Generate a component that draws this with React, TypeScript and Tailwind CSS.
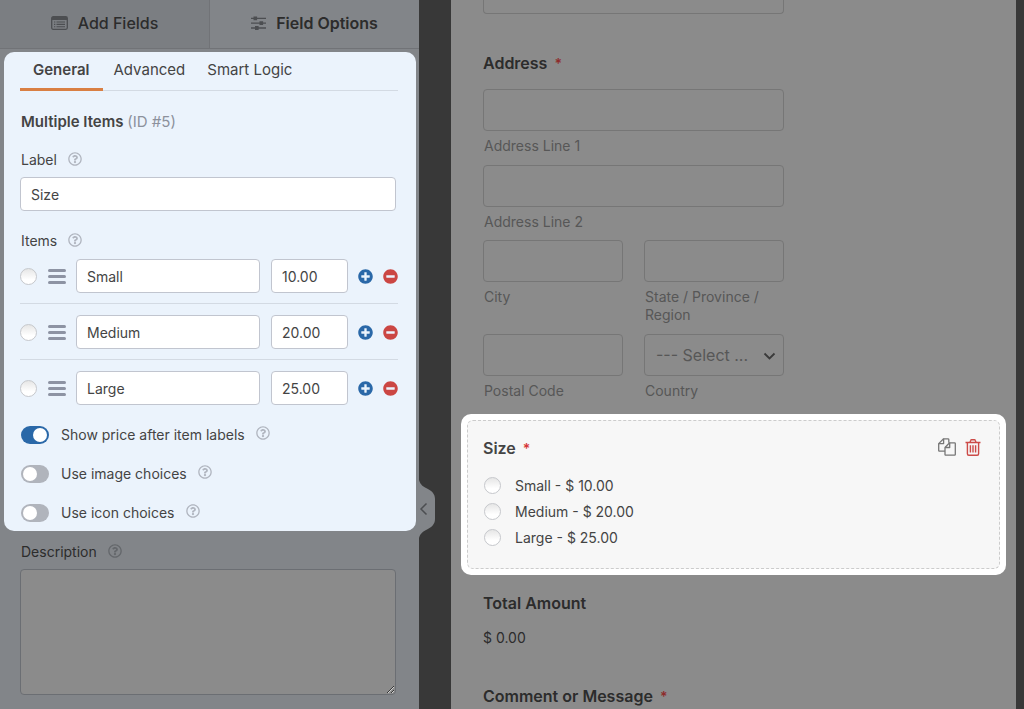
import { useState } from 'react';
import clsx from 'clsx';
import {
  FaMinusCircle,
  FaPlusCircle,
  FaRegQuestionCircle,
} from 'react-icons/fa';

import type { FC, ReactNode } from 'react';

interface Item {
  name: string;
  price: string;
}

const ITEMS: Item[] = [
  { name: 'Small', price: '10.00' },
  { name: 'Medium', price: '20.00' },
  { name: 'Large', price: '25.00' },
];

const TABS = ['General', 'Advanced', 'Smart Logic'];

const radioClass =
  'size-[17px] shrink-0 appearance-none rounded-full border border-[#c6c8cc] bg-linear-to-b from-[#e6e6e6] to-white to-70%';

const fieldClass =
  'h-[34px] min-w-0 rounded-[4px] border border-[#c1c5cf] bg-white px-[10px] pt-px text-sm text-[#444]';

const previewInputClass =
  'h-[42px] w-full rounded-[4px] border border-[#767676] bg-transparent';

const ListIcon: FC = () => (
  <svg width="17" height="14" viewBox="0 0 17 14" fill="none">
    <rect x=".7" y=".7" width="15.6" height="12.6" rx="1.5" stroke="#4c4e51" strokeWidth="1.3" />
    <path d="M1 1h15v3H1z" fill="#4c4e51" />
    <path d="M3 6h1.3M3 8.4h1.3M3 10.8h1.3M5.5 6H14M5.5 8.4H14M5.5 10.8H14" stroke="#4c4e51" strokeWidth="1.1" />
  </svg>
);

const SlidersIcon: FC = () => (
  <svg width="15" height="14" viewBox="0 0 15 14">
    <path d="M0 2.3h15M0 7.2h15M0 12h15" stroke="#4c4e51" strokeWidth="1.3" />
    <path d="M2.5.4h3.6v3.8H2.5zM8.5 5.3h3.6v3.8H8.5zM4 10.1h3.6v3.8H4z" fill="#4c4e51" />
  </svg>
);

const CopyIcon: FC = () => (
  <svg width="18" height="18" viewBox="0 0 18 18" fill="none" stroke="#777" strokeWidth="1.3" strokeLinejoin="round">
    <path d="M7 13.2H1.5a.8.8 0 0 1-.8-.8V5.6L5.6.8H10a.8.8 0 0 1 .8.8v3.2" />
    <path d="M5.6.8v4.8H.8" />
    <path d="M11.6 4.8h5a.7.7 0 0 1 .7.7v11a.7.7 0 0 1-.7.7H7.7a.7.7 0 0 1-.7-.7V9.5z" />
    <path d="M11.7 4.8v4.7H7" />
  </svg>
);

const TrashIcon: FC = () => (
  <svg width="16" height="17" viewBox="0 0 16 17" fill="none" stroke="#cc4b48" strokeWidth="1.4">
    <path d="M.5 3.5h15M5 3.3 5.8 1.3c.1-.3.4-.5.7-.5h3c.3 0 .6.2.7.5l.8 2" />
    <path d="M2.4 3.5v11.2c0 .8.6 1.5 1.4 1.5h8.4c.8 0 1.4-.7 1.4-1.5V3.5" />
    <path d="M5.4 6.2v7.2M8 6.2v7.2M10.6 6.2v7.2" />
  </svg>
);

const Help: FC<{ dim?: boolean }> = ({ dim }) => (
  <button type="button" aria-label="Help" className="-mt-[3px]">
    <FaRegQuestionCircle
      className={clsx('size-[14px]', dim ? 'text-[#64676b]' : 'text-[#b0b5bf]')}
    />
  </button>
);

const Required: FC<{ dim?: boolean }> = ({ dim }) => (
  <span className={clsx('ml-[3px] text-sm', dim ? 'text-[#8e2c2b]' : 'text-[#d63637]')}>
    *
  </span>
);

interface ToggleProps {
  id: string;
  label: string;
  defaultChecked?: boolean;
}

const Toggle: FC<ToggleProps> = ({ id, label, defaultChecked }) => (
  <div className="flex h-[39px] items-center text-sm">
    <input
      id={id}
      type="checkbox"
      role="switch"
      defaultChecked={defaultChecked}
      className="ml-px h-[18px] w-7 appearance-none rounded-full bg-[#b0b4bc] p-[2px] before:block before:size-[14px] before:rounded-full before:bg-white checked:bg-[#2a68a8] checked:before:translate-x-[10px]"
    />
    <label htmlFor={id} className="mr-[11px] ml-3 pt-px">
      {label}
    </label>
    <Help />
  </div>
);

const AddressField: FC<{ id: string; label: string; children?: ReactNode }> = ({
  id,
  label,
  children,
}) => (
  <div>
    {children || <input id={id} type="text" className={clsx(previewInputClass, 'block')} />}
    <label
      htmlFor={id}
      className="mt-[6px] block pl-px text-sm leading-[18px] text-[#575757]"
    >
      {label}
    </label>
  </div>
);

const Sidebar: FC = () => {
  const [tab, setTab] = useState('General');

  return (
    <aside className="relative w-[419px] shrink-0 bg-[#828589] text-[15px] leading-5 text-[#444]">
      <nav className="flex h-[49px] border-b border-[#717377] text-base text-[#2c2c2c]">
        <button
          type="button"
          className="flex flex-1 items-center justify-center gap-[10px] border-r border-[#717377] bg-[#7b7e82] pb-[2px] font-medium"
        >
          <ListIcon />
          Add Fields
        </button>
        <button
          type="button"
          className="flex flex-1 items-center justify-center gap-[10px] pb-[2px] font-semibold"
        >
          <SlidersIcon />
          Field Options
        </button>
      </nav>

      <section className="mr-[3px] ml-1 mt-[3px] h-[479px] rounded-[10px] bg-[#ebf3fc] pr-[18px] pl-4">
        <div className="flex h-[39px] border-b border-[#d3dae3]">
          {TABS.map((name) => (
            <button
              key={name}
              type="button"
              onClick={() => setTab(name)}
              className={clsx(
                'h-[39px] border-b-3',
                tab === name
                  ? 'border-[#d97f43] px-[13px] font-semibold'
                  : 'border-transparent px-[11px]',
              )}
            >
              {name}
            </button>
          ))}
        </div>

        <h2 className="mt-[21px] pl-px font-semibold">
          Multiple Items <span className="font-normal text-[#8c919c]">(ID #5)</span>
        </h2>

        <div className="mt-[18px] flex items-center gap-[11px] pl-px text-sm leading-5">
          <label htmlFor="field-label">Label</label>
          <Help />
        </div>
        <div className="mt-[7px] pr-[2px]">
          <input id="field-label" type="text" defaultValue="Size" className={clsx(fieldClass, 'block w-full')} />
        </div>

        <div className="mt-5 flex items-center gap-[11px] pl-px text-sm leading-5">
          <span>Items</span>
          <Help />
        </div>
        <div className="mt-2 divide-y divide-[#d3dae3]">
          {ITEMS.map((item) => (
            <div key={item.name} className="flex items-center pb-[10px] not-first:pt-[11px]">
              <input type="radio" name="default-item" aria-label={`${item.name} by default`} className={radioClass} />
              <button type="button" aria-label="Reorder" className="mr-[10px] ml-[11px] flex w-[18px] shrink-0 flex-col gap-[3px]">
                <span className="h-[3px] rounded-xs bg-[#8d93a3]" />
                <span className="h-[3px] rounded-xs bg-[#8d93a3]" />
                <span className="h-[3px] rounded-xs bg-[#8d93a3]" />
              </button>
              <input type="text" aria-label="Item name" defaultValue={item.name} className={clsx(fieldClass, 'flex-1')} />
              <input type="text" aria-label="Item price" defaultValue={item.price} className={clsx(fieldClass, 'mr-[10px] ml-[11px] w-[77px]')} />
              <button type="button" aria-label="Add item" className="mr-[10px]">
                <FaPlusCircle className="size-[15px] text-[#2a68a8]" />
              </button>
              <button type="button" aria-label="Remove item">
                <FaMinusCircle className="size-[15px] text-[#cb4643]" />
              </button>
            </div>
          ))}
        </div>

        <Toggle id="show-price" label="Show price after item labels" defaultChecked />
        <Toggle id="image-choices" label="Use image choices" />
        <Toggle id="icon-choices" label="Use icon choices" />
      </section>

      <div className="pt-[11px] pr-[23px] pl-5">
        <div className="flex items-center gap-[11px] pl-px text-sm leading-5 text-[#2c2c2c]">
          <label htmlFor="description">Description</label>
          <Help dim />
        </div>
        <textarea
          id="description"
          className="mt-[7px] block h-[126px] w-full rounded-[4px] border border-[#6b6e73] bg-[#8b8b8b]"
        />
      </div>

      <button type="button" aria-label="Collapse sidebar" className="absolute top-[480px] left-full">
        <svg width="16" height="58" viewBox="0 0 16 58" fill="none">
          <path d="M0 0c1.5 5 4 6.500 8 8.500C13 11 16 14 16 19v20c0 5-3 8-8 10.500-4 2-6.500 3.500-8 8.500z" fill="#828589" />
          <path d="M7.500 23.500 2 29l5.500 5.500" stroke="#4c4e51" strokeWidth="1.500" />
        </svg>
      </button>
    </aside>
  );
};

const Preview: FC = () => (
  <main className="ml-8 min-w-0 flex-1 bg-[#8b8b8b] px-[10px] text-[#2c2c2c]">
    <div className="px-[22px]">
      <input type="text" aria-label="Previous field" className="block h-[14px] w-[301px] rounded-b-[4px] border border-t-0 border-[#767676]" />

      <h3 className="mt-[37px] text-base font-semibold">
        Address <Required dim />
      </h3>
      <div className="mt-[14px] flex w-[301px] flex-col gap-[10px]">
        <AddressField id="line1" label="Address Line 1" />
        <AddressField id="line2" label="Address Line 2" />
        <div className="-mt-px grid grid-cols-2 gap-x-[21px] gap-y-[10px]">
          <AddressField id="city" label="City" />
          <AddressField id="state" label="State / Province / Region" />
          <AddressField id="postal" label="Postal Code" />
          <AddressField id="country" label="Country">
            <div className="relative">
              <select id="country" className={clsx(previewInputClass, 'block appearance-none pl-[11px] text-base text-[#575757]')}>
                <option>--- Select ...</option>
              </select>
              <svg className="pointer-events-none absolute top-[18px] right-2" width="13" height="9" viewBox="0 0 13 9" fill="none">
                <path d="m1.500 1.500 5 5 5-5" stroke="#3a3a3a" strokeWidth="1.800" />
              </svg>
            </div>
          </AddressField>
        </div>
      </div>
    </div>

    <section className="mt-[14px] rounded-[10px] bg-white p-[6px]">
      <div className="h-[149px] rounded-[6px] border border-dashed border-[#ccc] bg-[#f7f7f7] pt-[15px] pr-[18px] pl-[15px] text-[#444]">
        <div className="flex items-start justify-between">
          <h3 className="text-base font-semibold">
            Size <Required />
          </h3>
          <div className="flex gap-[9px] pt-[2px]">
            <button type="button" aria-label="Duplicate">
              <CopyIcon />
            </button>
            <button type="button" aria-label="Delete">
              <TrashIcon />
            </button>
          </div>
        </div>
        <ul className="mt-3 text-sm">
          {ITEMS.map((item) => (
            <li key={item.name} className="flex h-[26px] items-center gap-[14px]">
              <input id={`size-${item.name}`} type="radio" name="size" className={clsx(radioClass, 'ml-px')} />
              <label htmlFor={`size-${item.name}`} className="pt-[2px]">
                {item.name} - $ {item.price}
              </label>
            </li>
          ))}
        </ul>
      </div>
    </section>

    <div className="px-[22px]">
      <h3 className="mt-4 text-base font-semibold">Total Amount</h3>
      <p className="mt-[13px] text-sm leading-5">$ 0.00</p>
      <h3 className="mt-9 text-base font-semibold">
        Comment or Message <Required dim />
      </h3>
    </div>
  </main>
);

export default function App() {
  return (
    <div className="flex min-h-screen bg-[#383838] pr-2 font-[Inter,'Liberation_Sans',sans-serif]">
      <Sidebar />
      <Preview />
    </div>
  );
}
